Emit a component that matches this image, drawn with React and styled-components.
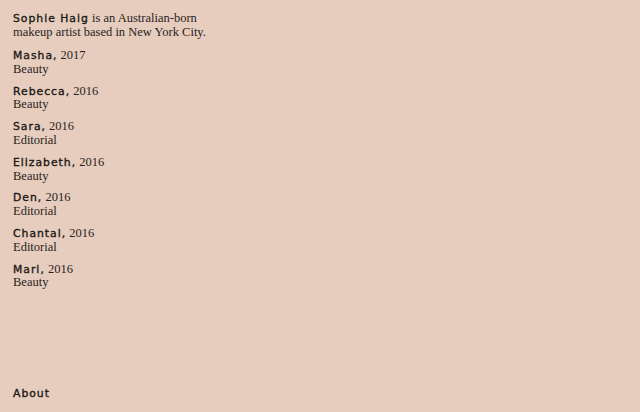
import React from "react";
import styled, { createGlobalStyle } from "styled-components";

const GlobalStyle = createGlobalStyle`
  html, body {
    margin: 0;
    padding: 0;
    background: #e6cdbe;
  }
`;

const works = [
  { name: "Masha", year: 2017, kind: "Beauty" },
  { name: "Rebecca", year: 2016, kind: "Beauty" },
  { name: "Sara", year: 2016, kind: "Editorial" },
  { name: "Elizabeth", year: 2016, kind: "Beauty" },
  { name: "Den", year: 2016, kind: "Editorial" },
  { name: "Chantal", year: 2016, kind: "Editorial" },
  { name: "Mari", year: 2016, kind: "Beauty" },
];

const App = () => {
  return (
    <Page>
      <GlobalStyle />
      <Intro>
        <Name>Sophie Haig</Name> is an Australian-born
        <br />
        makeup artist based in New York City.
      </Intro>
      <List>
        {works.map((w) => (
          <Item key={w.name}>
            <Name>{w.name},</Name> {w.year}
            <br />
            {w.kind}
          </Item>
        ))}
      </List>
      <Footer>
        <Name>About</Name>
      </Footer>
    </Page>
  );
};

export default App;

const Page = styled.div`
  min-height: 100vh;
  box-sizing: border-box;
  display: flex;
  flex-direction: column;
  padding: 11px 13px 12px;
  color: #2a2320;
  font-family: "Liberation Serif", serif;
  font-size: 12.5px;
  line-height: 14px;
`;

const Name = styled.span`
  font-family: "DejaVu Sans", sans-serif;
  font-size: 10.8px;
  line-height: 1;
  letter-spacing: 1px;
  -webkit-text-stroke: 0.35px #1b1816;
  color: #1b1816;
`;

const Intro = styled.p`
  margin: 0 0 10px;
`;

const List = styled.div`
  display: flex;
  flex-direction: column;
  gap: 8px;
`;

const Item = styled.div`
  line-height: 13.8px;
`;

const Footer = styled.div`
  margin-top: auto;
`;
